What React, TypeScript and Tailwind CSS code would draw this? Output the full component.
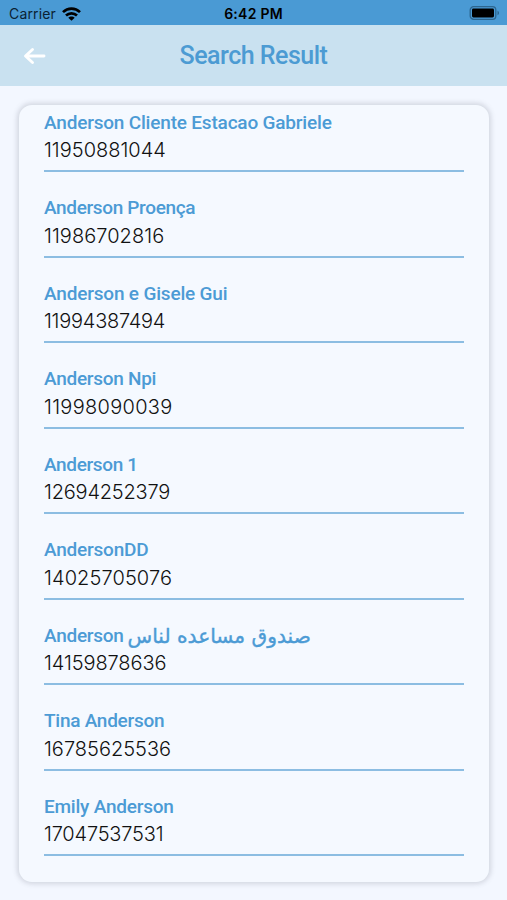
const contacts = [
  { name: "Anderson Cliente Estacao Gabriele", phone: "11950881044", nameTracking: "tracking-[-0.19px]", phoneTracking: "tracking-[0px]" },
  { name: "Anderson Proença", phone: "11986702816", nameTracking: "tracking-[-0.35px]", phoneTracking: "tracking-[0.05px]" },
  { name: "Anderson e Gisele Gui", phone: "11994387494", nameTracking: "tracking-[-0.18px]", phoneTracking: "tracking-[-0.25px]" },
  { name: "Anderson Npi", phone: "11998090039", nameTracking: "tracking-[-0.28px]", phoneTracking: "tracking-[0.3px]" },
  { name: "Anderson 1", phone: "12694252379", nameTracking: "tracking-[-0.35px]", phoneTracking: "tracking-[-0.2px]" },
  { name: "AndersonDD", phone: "14025705076", nameTracking: "tracking-[-0.22px]", phoneTracking: "tracking-[0.1px]" },
  { name: "Anderson", arabic: "صندوق مساعده لناس", phone: "14159878636", nameTracking: "tracking-[-0.28px]", phoneTracking: "tracking-[-0.1px]" },
  { name: "Tina Anderson", phone: "16785625536", nameTracking: "tracking-[-0.26px]", phoneTracking: "tracking-[0px]" },
  { name: "Emily Anderson", phone: "17047537531", nameTracking: "tracking-[-0.22px]", phoneTracking: "tracking-[-0.2px]" },
];

function StatusBar() {
  return (
    <div className="grid h-[25px] grid-cols-3 items-center bg-[#4a9ad4] pt-[2px] pl-[9px] pr-[7px] font-['Inter',sans-serif] text-black">
      <div className="flex items-center gap-[6px]">
        <span className="text-[14px] leading-none tracking-[0.15px] text-[#0b2233]">Carrier</span>
        <svg width="19" height="14" viewBox="0 0 19 14" fill="none" stroke="currentColor" strokeWidth="2.7">
          <path d="M1 5.1C5.8.5 13.2.5 18 5.1" />
          <path d="M4 8.6c3.1-2.9 7.9-2.9 11 0" />
          <path d="M9.5 13.8 6.3 10.8c1.6-1.6 4.8-1.6 6.4 0Z" fill="currentColor" stroke="none" />
        </svg>
      </div>
      <span className="-ml-[2px] pt-[1px] text-center text-[14px] font-semibold leading-none tracking-[0.25px]">6:42 PM</span>
      <svg className="-mt-[1px] justify-self-end" width="31" height="14" viewBox="0 0 31 14">
        <rect x="1.2" y="0.7" width="25.6" height="12.6" rx="3.4" fill="none" stroke="#2d668f" strokeWidth="1.3" />
        <rect x="3" y="2.6" width="22" height="8.8" rx="1.4" fill="#000" />
        <path d="M28.5 4.8c2 .7 2 3.7 0 4.4Z" fill="#2d668f" />
      </svg>
    </div>
  );
}

function Header() {
  return (
    <header className="grid h-[61px] grid-cols-[60px_1fr_60px] items-center bg-[#c9e1f0]">
      <svg className="ml-[23px]" width="24" height="18" viewBox="0 0 24 18" fill="none" stroke="#fff" strokeWidth="2.9" strokeLinecap="round" strokeLinejoin="round">
        <path d="M9.5 2.5 2.5 9l7 6.5M3 9h18" />
      </svg>
      <h1 className="text-center text-[25px] font-medium leading-none tracking-[-0.5px] text-[#4c9bd3]">Search Result</h1>
    </header>
  );
}

export default function App() {
  return (
    <div className="flex h-[900px] w-full flex-col overflow-hidden bg-[#f3f7ff] font-['Roboto',sans-serif]">
      <StatusBar />
      <Header />
      <main className="mx-[19px] mt-[19px] h-[777px] w-[470px] rounded-[13px] bg-[#f5f9ff] px-[25px] shadow-[0_0_5px_2px_rgba(80,85,100,0.2)]">
        <ul>
          {contacts.map((c) => (
            <li key={c.phone} className="flex h-[85.5px] flex-col">
              <div className={`mt-[6px] flex h-[24px] items-center whitespace-nowrap text-[19px] font-medium text-[#4c9bd5] ${c.nameTracking}`}>
                {c.name}
                {c.arabic && (
                  <span dir="rtl" lang="ar" className="ml-[4px] font-['DejaVu_Sans',sans-serif] text-[20.2px] font-normal tracking-normal [-webkit-text-stroke:0.4px_#4c9bd5]">
                    {c.arabic}
                  </span>
                )}
              </div>
              <div className={`flex h-[30px] items-center font-['Inter',sans-serif] text-[20px] font-light text-[#111] ${c.phoneTracking}`}>{c.phone}</div>
              <div className="mt-[5px] h-[2px] bg-[#8cbde2]" />
            </li>
          ))}
        </ul>
      </main>
    </div>
  );
}
